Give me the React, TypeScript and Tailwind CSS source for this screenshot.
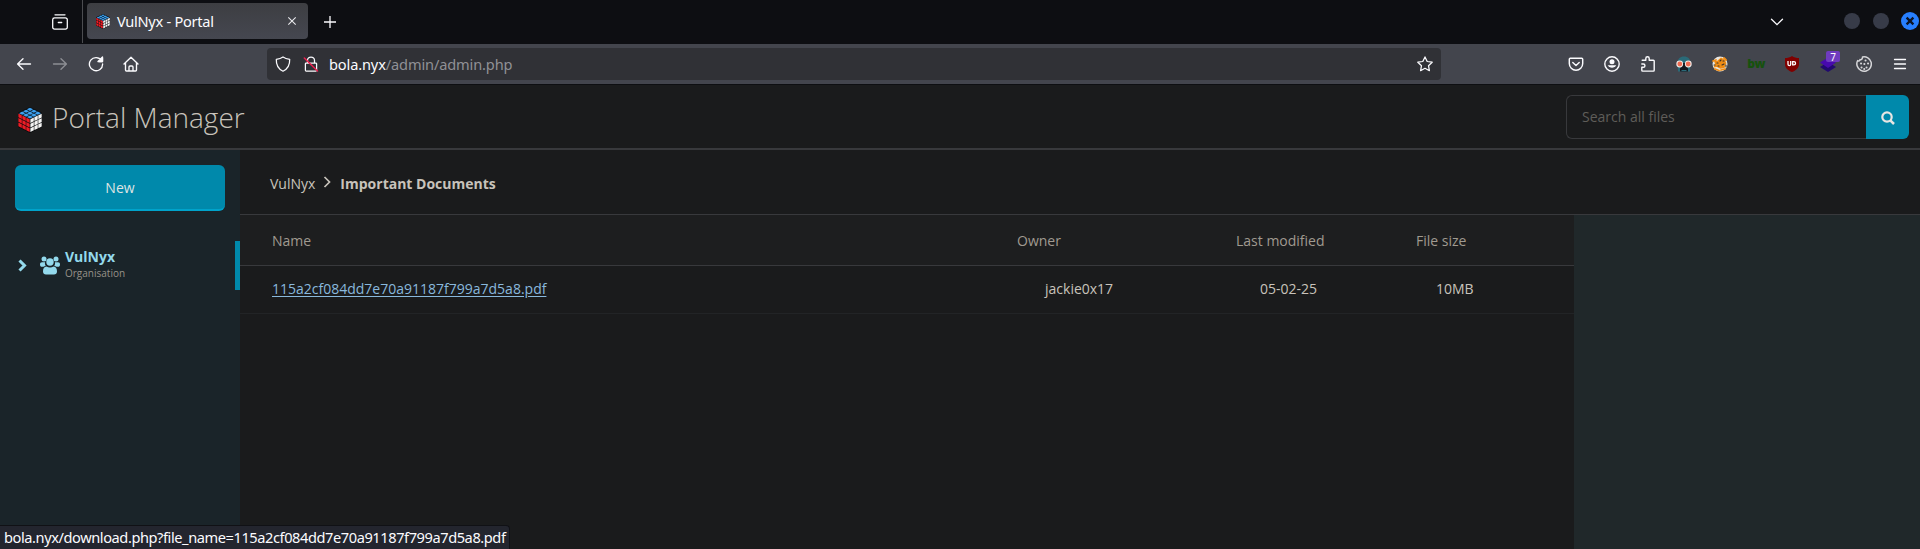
import type { ReactNode } from "react";

type IconProps = { children: ReactNode; className?: string };

const Icon = ({ children, className = "" }: IconProps) => (
  <svg
    width="16"
    height="16"
    viewBox="0 0 16 16"
    fill="none"
    stroke="#fbfbfe"
    strokeWidth="1.25"
    strokeLinecap="round"
    strokeLinejoin="round"
    className={"shrink-0 " + className}
  >
    {children}
  </svg>
);

const cells = [0, 1, 2].flatMap((u) => [0, 1, 2].map((v) => [u, v]));

// Isometric cube with three 3x3 faces.
function Cube({ className }: { className: string }) {
  return (
    <svg viewBox="0 0 24 26" className={"shrink-0 " + className}>
      <path d="M12 0 24 5.7v14.2L12 26 0 19.9V5.7z" fill="#090b0d" />
      {cells.map(([u, v]) => (
        <g key={`${u}${v}`}>
          <path d="M.4 .4h3.3v3.3H.4z" fill="#3ba0f0" transform={`matrix(.97 .48 -.97 .48 ${12 + (u - v) * 3.9} ${0.4 + (u + v) * 1.9})`} />
          <path d="M.3 .4h3.4v3.8H.3z" fill="#ee1c25" transform={`matrix(1 .5 0 1 ${0.1 + u * 3.95} ${6 + u * 1.95 + v * 4.5})`} />
          <path d="M.3 .4h3.4v3.8H.3z" fill="#f4f4f4" transform={`matrix(1 -.5 0 1 ${12.1 + u * 3.95} ${12 - u * 1.95 + v * 4.5})`} />
        </g>
      ))}
    </svg>
  );
}

function TabStrip() {
  return (
    <div className="flex h-11 items-center bg-[#0d0e12]">
      <svg width="16" height="16" viewBox="0 0 16 16" fill="none" stroke="#fbfbfe" strokeWidth="1.3" strokeLinecap="round" className="ml-[52px]">
        <path d="M3 .8h10M2.500 3.900h11a1.800 1.800 0 0 1 1.800 1.800v7.600a1.800 1.800 0 0 1-1.800 1.800h-11a1.800 1.800 0 0 1-1.800-1.800V5.700a1.800 1.800 0 0 1 1.800-1.800zM6.300 8.500h3.400" />
      </svg>
      <div className="ml-[14px] h-[43px] w-px self-start bg-[#4b4c50]" />
      <div className="-mt-0.5 ml-1 flex h-9 w-[221px] items-center rounded bg-gradient-to-b from-[#3d3e42] to-[#454750] pl-[9px] pr-[11px]">
        <Cube className="h-[15px] w-[14px]" />
        <span className="ml-[7px] flex-1 pt-px text-[14.6px] tracking-[-0.28px] text-[#fbfbfe]">VulNyx - Portal</span>
        <svg width="10" height="10" viewBox="0 0 10 10" stroke="#e8e8ec" strokeWidth="1.100"><path d="m1.300 1.300 7.400 7.400m0-7.400-7.400 7.400" /></svg>
      </div>
      <svg width="12" height="12" viewBox="0 0 12 12" stroke="#fbfbfe" strokeWidth="1.300" className="ml-4"><path d="M6 0v12M0 6h12" /></svg>
      <div className="flex-1" />
      <svg width="14" height="8" viewBox="0 0 14 8" fill="none" stroke="#fbfbfe" strokeWidth="1.300" strokeLinecap="round" className="mr-[60px]"><path d="m1.500 1.200 5.500 5.500 5.500-5.500" /></svg>
      <div className="-mt-0.5 flex items-center">
        <span className="mr-[13px] size-4 rounded-full bg-[#373b48]" />
        <span className="mr-3 size-4 rounded-full bg-[#373b48]" />
        <svg width="18" height="18" viewBox="0 0 18 18" className="mr-px"><circle cx="9" cy="9" r="9" fill="#277fff" /><path d="m5.600 5.600 6.800 6.800m0-6.800-6.800 6.800" stroke="#0c1425" strokeWidth="2.300" /></svg>
      </div>
    </div>
  );
}

function Extensions() {
  return (
    <div className="flex items-center gap-5 pr-[12px]">
      <Icon><path d="M2.300 2.300h11.400c.6 0 1 .4 1 1v4.200a6.700 6.700 0 0 1-13.400 0V3.300c0-.6.4-1 1-1zM4.800 6.500 8 9.500l3.200-3" strokeWidth="1.450" /></Icon>
      <Icon><circle cx="8" cy="8" r="7.200" strokeWidth="1.400" /><circle cx="8" cy="5.700" r="2.500" fill="#fbfbfe" stroke="none" /><path d="M3.700 9.200h8.600a5 5 0 0 1-8.600 0z" fill="#fbfbfe" stroke="none" /></Icon>
      <Icon><path d="M2.200 4.300h3.600V2.500a1.700 1.700 0 0 1 3.400 0v1.800h4.200c.5 0 .8.300.8.800v9.200c0 .5-.3.800-.8.800H2.600c-.5 0-.8-.3-.8-.8v-3h1.500a1.600 1.600 0 0 0 0-3.300H1.800" strokeWidth="1.400" /></Icon>
      <Icon>
        <g stroke="none">
          <path d="M1.500 7C1.500 3 4 .5 8 .5S14.500 3 14.500 7L14 15.500H2z" fill="#2a6a78" />
          <path d="M5 7h6v4l1 1.500v3H4v-3L5 11z" fill="#15181e" />
          <circle cx="3.700" cy="8" r="3.400" fill="#f2ebe6" /><circle cx="12.300" cy="8" r="3.400" fill="#f2ebe6" />
          <circle cx="3.800" cy="8" r="2.400" fill="#f06b52" /><circle cx="12.200" cy="8" r="2.400" fill="#f06b52" />
          <path d="M5.500 14h5v1h-5z" fill="#2a6a78" />
        </g>
      </Icon>
      <Icon>
        <circle cx="8" cy="8" r="7.500" fill="#e9e7e2" stroke="none" />
        <path d="M2 4.500 5 5l4-3.500 3.500 2L14.500 7l-2 5-4 .8L5 11l-3.500.5L3 8z" fill="#f08c14" stroke="none" />
        <path d="m1 5 3-1M3 13l4 1.500M12 2l2 2M9 14l4-1" stroke="#f08c14" strokeWidth="1.800" />
        <path d="M5 7h1M8 5l1-1M10 9l2-1M6 10h1M11 5h1M14 9v2M2 9h1" stroke="#38322b" strokeWidth="1.100" />
      </Icon>
      <span className="flex h-4 w-4 items-center justify-center font-['Open_Sans',sans-serif] text-[12px] font-extrabold tracking-[-0.5px] text-[#16510e]">bw</span>
      <span className="relative flex h-4 w-4 items-center justify-center">
        <svg viewBox="0 0 16 16" className="absolute inset-0"><path d="M8 0c2 1.500 4.500 2 7 2v6c0 4-3 6.500-7 8-4-1.500-7-4-7-8V2c2.500 0 5-.5 7-2z" fill="#800000" /></svg>
        <svg viewBox="0 0 16 16" className="absolute inset-0" fill="none" stroke="#fff" strokeWidth="1.300"><path d="M4 5v3.200a1.300 1.300 0 0 0 2.700 0V5M8.700 5.600v3.300h1.200a1.650 1.650 0 0 0 0-3.300z" /></svg>
      </span>
      <span className="relative h-4 w-4">
        <svg viewBox="0 0 16 16" className="size-4"><path d="m0 11 4-2.500h8l4 2.500-8 5z" fill="#21096f" /><path d="m0 6.500 8-5 8 5-8 5.500z" fill="#4709ae" /></svg>
        <span className="absolute -top-[5px] left-[6px] flex h-[11px] w-[14px] items-center justify-center rounded-[2px] bg-[#6f3bbf] text-[10px] leading-none text-white">7</span>
      </span>
      <Icon>
        <path d="M6.500 1a7.200 7.200 0 1 1-5.200 9.300C.5 8 .8 6 1.700 4.600c1 .8 2.400.3 2.300-1 1.500.4 2.600-.8 2.500-2.600z" strokeWidth="1.500" stroke="#d6d6d9" />
        <path d="M9.500 4.500h.1M12 7.500h.1M5 7.500h.1M8.300 8h.1M5.500 11.500h.1M10.500 11.500h.1M8.200 13h.1" strokeWidth="2" stroke="#d6d6d9" />
      </Icon>
      <Icon><path d="M2.500 3.500h11M2.500 8h11M2.500 12.500h11" strokeWidth="1.300" /></Icon>
    </div>
  );
}

function Toolbar() {
  return (
    <div className="flex h-[41px] items-center border-b border-[#0e0f12] bg-[#43454d]">
      <div className="flex w-[267px] items-center gap-5 pl-4">
        <Icon><path d="M14.500 8H1.700M7 2.700 1.600 8 7 13.300" strokeWidth="1.350" /></Icon>
        <Icon className="opacity-40"><path d="M1.500 8h12.800M9 2.700 14.400 8 9 13.300" strokeWidth="1.350" /></Icon>
        <Icon><path d="M13.500 4.500A6.600 6.600 0 1 0 14.600 8M10 5.500h4.500V1z" strokeWidth="1.350" /><path d="M11 5.500h3.500V2z" fill="#fbfbfe" /></Icon>
        <Icon className="-ml-px"><path d="M1 8 8 1.300 15 8M2.500 7v7c0 .6.300 1 .9 1h9.200c.6 0 .9-.4.900-1V7M6 14.500V11a1 1 0 0 1 1-1h2a1 1 0 0 1 1 1v3.500" strokeWidth="1.350" /></Icon>
      </div>
      <div className="flex h-8 w-[1174px] items-center rounded bg-[#303136] px-2">
        <Icon><path d="M8 .9c2 1.400 4 2 6.700 2.400.2 5-1.200 9.400-6.700 11.900C2.500 12.700 1.100 8.300 1.300 3.300 4 2.900 6 2.300 8 .9z" /></Icon>
        <Icon className="ml-3">
          <path d="M4.500 6.500v-2a3.500 3.500 0 0 1 7 0v2M3.200 7h9.600c.5 0 .8.300.8.800v6.400c0 .5-.3.800-.8.800H3.200c-.5 0-.8-.3-.8-.8V7.800c0-.5.300-.8.800-.8z" />
          <path d="m1.300 2 13.200 13" stroke="#e8204e" strokeWidth="1.500" />
        </Icon>
        <span className="ml-[10px] flex-1 pt-px text-[14.6px] tracking-[-0.14px] text-[#8f9095]"><span className="text-[#fbfbfe]">bola.nyx</span>/admin/admin.php</span>
        <Icon><path d="m8 .9 2.200 4.600 5 .7-3.700 3.500.9 5L8 12.300l-4.400 2.400.9-5L.8 6.200l5-.7z" /></Icon>
      </div>
      <div className="flex-1" />
      <Extensions />
    </div>
  );
}

function PortalHeader() {
  return (
    <header className="flex h-[65px] items-center border-b-2 border-[#38393c] bg-[#1a1b1c]">
      <Cube className="ml-[18px] mt-1.5 h-[26px] w-6" />
      <h1 className="ml-[10px] flex-1 text-[28px] font-light leading-none text-[#c8c3bb]">Portal Manager</h1>
      <div className="flex h-11 w-[343px]">
        <div className="flex flex-1 items-center rounded-l-md border border-r-0 border-[#38393c] pl-[15px] text-[14px] text-[#5f5d59]">Search all files</div>
        <div className="flex w-[43px] items-center justify-center rounded-r-md bg-[#0089ab]">
          <svg width="14" height="14" viewBox="0 0 14 14" fill="none" stroke="#e8e6e3" strokeWidth="2.200" className="mt-0.5"><circle cx="6" cy="6" r="4.700" /><path d="m9.300 9.300 3.700 3.700" strokeWidth="2.500" /></svg>
        </div>
      </div>
      <div className="w-[11px]" />
    </header>
  );
}

function Sidebar() {
  return (
    <aside className="w-60 shrink-0 bg-[#1a2429]">
      <div className="mx-[15px] mt-[15px] flex h-[46px] items-center justify-center rounded-md border-b-2 border-[#00a3cb] bg-[#0089ab] text-[14px] text-[#dfe4e4]">New</div>
      <div className="mt-[30px] flex h-[49px] items-center border-r-[5px] border-[#0089ab] pl-[18px]">
        <svg width="9" height="13" viewBox="0 0 9 13" fill="none" stroke="#93d9ec" strokeWidth="3"><path d="m1.500 1.500 5 5-5 5" /></svg>
        <svg width="20" height="19" viewBox="0 0 20 19" fill="#93d9ec" className="ml-[13px]">
          <circle cx="4" cy="3" r="2.500" /><circle cx="16" cy="3" r="2.500" /><circle cx="10" cy="6" r="3.700" />
          <path d="M2 6.300h3.100c-.4 1.400 0 2.700.7 3.700-1 0-1.800.3-2.300.8H2c-1.300 0-2-.8-2-2.300s.7-2.200 2-2.200zM18 6.300h-3.100c.4 1.400 0 2.700-.7 3.700 1 0 1.800.3 2.300.8H18c1.300 0 2-.8 2-2.300s-.7-2.200-2-2.200z" />
          <path d="M6.500 10.600c1 .6 2.200.9 3.500.9s2.500-.3 3.500-.9c2.500 0 3.500 2.200 3.500 5 0 1.900-1.200 2.900-3 2.900H6c-1.800 0-3-1-3-2.900 0-2.800 1-5 3.500-5z" />
        </svg>
        <div className="-mt-[3px] ml-[5px]">
          <div className="text-[14px] font-bold leading-[17px] text-[#93d9ec]">VulNyx</div>
          <div className="text-[10px] leading-[16px] text-[#979188]">Organisation</div>
        </div>
      </div>
    </aside>
  );
}

function Files() {
  return (
    <main className="flex flex-1 flex-col bg-[#1a1b1c] text-[14px]">
      <nav className="flex h-[65px] items-center border-b border-[#38393c] pl-[30px] pt-0.5 text-[#c8c3bb]">
        <span>VulNyx</span>
        <svg width="9" height="12" viewBox="0 0 9 12" fill="none" stroke="#c8c3bb" strokeWidth="1.700" className="-mt-0.5 ml-2 mr-2"><path d="m1.500 1 5 5-5 5" /></svg>
        <strong className="font-bold">Important Documents</strong>
      </nav>
      <div className="flex flex-1">
        <div className="w-[1334px]">
          <div className="flex h-[51px] items-center border-b border-[#38393c] bg-[#1d1e1f] pl-8 text-[#a09a90]">
            <span className="w-[745px]">Name</span>
            <span className="w-[219px]">Owner</span>
            <span className="w-[180px]">Last modified</span>
            <span>File size</span>
          </div>
          <div className="flex h-12 items-center border-b border-[#222426] pb-0.5 pl-8 text-[#c8c3bb]">
            <a className="w-[773px] text-[#89b8dc] underline underline-offset-2">115a2cf084dd7e70a91187f799a7d5a8.pdf</a>
            <span className="w-[215px]">jackie0x17</span>
            <span className="w-44">05-02-25</span>
            <span>10MB</span>
          </div>
        </div>
        <div className="flex-1 bg-[#20282a]" />
      </div>
    </main>
  );
}

export default function App() {
  return (
    <div className="relative flex h-[549px] w-[1920px] flex-col overflow-hidden bg-[#1a1b1c] font-['Open_Sans',sans-serif]">
      <div className="font-['Noto_Sans',sans-serif]">
        <TabStrip />
        <Toolbar />
      </div>
      <PortalHeader />
      <div className="flex flex-1">
        <Sidebar />
        <Files />
      </div>
      <div className="absolute bottom-0 left-0 flex h-6 w-[510px] items-center whitespace-nowrap rounded-tr border-r border-t border-[#101115] bg-[#23252e] pl-1 font-['Noto_Sans',sans-serif] text-[14.6px] tracking-[-0.42px] text-[#fbfbfe]">
        bola.nyx/download.php?file_name=115a2cf084dd7e70a91187f799a7d5a8.pdf
      </div>
    </div>
  );
}
